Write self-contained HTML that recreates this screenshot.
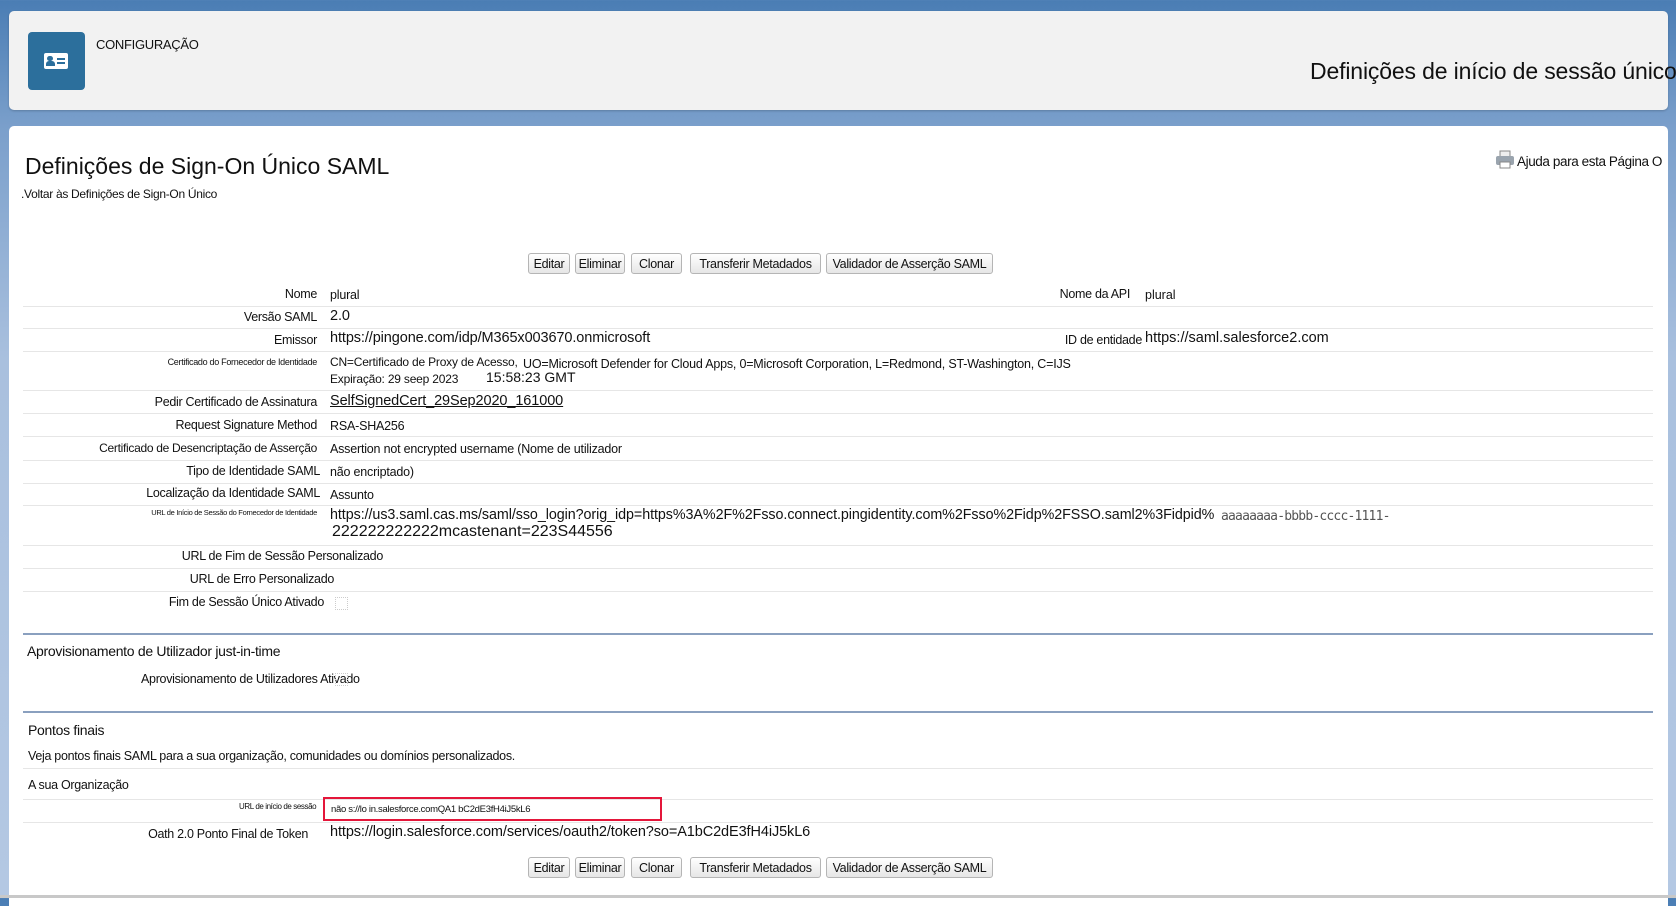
<!DOCTYPE html>
<html><head><meta charset="utf-8">
<style>
*{margin:0;padding:0;box-sizing:border-box}
body{width:1676px;height:898px;overflow:hidden;position:relative;font-family:"Liberation Sans",sans-serif;color:#111;background:linear-gradient(180deg,#4a7db4 0%,#7a9fcb 14%,#a9c0de 40%,#b4c8e3 100%)}
.a{position:absolute;white-space:nowrap}
.hdr{left:9px;top:11px;width:1659px;height:99px;background:#f2f2f2;border-radius:5px;box-shadow:0 1px 2px rgba(0,0,0,.2)}
.main{left:9px;top:126px;width:1659px;height:780px;background:#fff;border-radius:5px 5px 0 0}
.lb{left:0;width:317px;text-align:right;font-size:12.5px;letter-spacing:-.3px}
.sm{font-size:9px;letter-spacing:-.3px}
.v{left:330px;font-size:12.5px;letter-spacing:-.2px}
.vl{left:330px;font-size:14.5px;letter-spacing:-.1px}
.ln{left:23px;width:1630px;height:1px;background:#e6e6e6}
.bl{left:23px;width:1630px;height:2px;background:#8aa0bf}
.btn{height:21px;border:1px solid #b5b5b5;border-radius:3px;background:linear-gradient(#fff,#e6e6e6);font-size:12.5px;letter-spacing:-.3px;text-align:center;line-height:20px}
.cb{width:13px;height:13px;border:1px dotted #ccc}
</style></head><body>
<div class="a hdr"></div>
<div class="a" style="left:28px;top:32px;width:57px;height:58px;background:#2c6f9c;border-radius:4px"></div>
<div class="a" style="left:44px;top:53px;width:24px;height:16px;background:#fff;border-radius:2px"></div>
<div class="a" style="left:47px;top:56px;width:6px;height:5px;background:#2c6f9c;border-radius:3px"></div>
<div class="a" style="left:46px;top:61px;width:9px;height:5px;background:#2c6f9c;border-radius:3px 3px 0 0"></div>
<div class="a" style="left:57px;top:58px;width:8px;height:2px;background:#2c6f9c"></div>
<div class="a" style="left:57px;top:62px;width:8px;height:2px;background:#2c6f9c"></div>
<div class="a" style="left:96px;top:37px;font-size:13px;letter-spacing:-.3px">CONFIGURAÇÃO</div>
<div class="a" style="left:1310px;top:58px;font-size:23px;letter-spacing:-.15px">Definições de início de sessão único</div>

<div class="a main"></div>
<div class="a" style="left:25px;top:153px;font-size:23px">Definições de Sign-On Único SAML</div>
<div class="a" style="left:21px;top:187px;font-size:12px;letter-spacing:-.3px">.Voltar às Definições de Sign-On Único</div>
<svg class="a" style="left:1495px;top:150px" width="20" height="20" viewBox="0 0 20 20"><rect x="5" y="1" width="10" height="6" fill="#eee" stroke="#888"/><rect x="1" y="6" width="18" height="9" rx="2" fill="#9aa4ae"/><rect x="5" y="12" width="10" height="6" fill="#fff" stroke="#888"/></svg>
<div class="a" style="left:1517px;top:154px;font-size:13.5px;letter-spacing:-.4px">Ajuda para esta Página O</div>

<div class="a btn" style="left:528px;top:253px;width:42px">Editar</div>
<div class="a btn" style="left:575px;top:253px;width:50px">Eliminar</div>
<div class="a btn" style="left:631px;top:253px;width:51px">Clonar</div>
<div class="a btn" style="left:690px;top:253px;width:131px">Transferir Metadados</div>
<div class="a btn" style="left:826px;top:253px;width:167px">Validador de Asserção SAML</div>

<div class="a lb" style="top:287px">Nome</div><div class="a v" style="top:288px">plural</div>
<div class="a" style="left:1000px;width:130px;text-align:right;top:287px;font-size:12.5px;letter-spacing:-.3px">Nome da API</div><div class="a" style="left:1145px;top:288px;font-size:12.5px">plural</div>
<div class="a ln" style="top:306px"></div>
<div class="a lb" style="top:310px">Versão SAML</div><div class="a vl" style="top:308px">2.0</div>
<div class="a ln" style="top:328px"></div>
<div class="a lb" style="top:333px">Emissor</div><div class="a vl" style="top:330px">https://pingone.com/idp/M365x003670.onmicrosoft</div>
<div class="a" style="left:1000px;width:142px;text-align:right;top:333px;font-size:12.5px;letter-spacing:-.3px">ID de entidade</div><div class="a" style="left:1145px;top:330px;font-size:14.5px">https://saml.salesforce2.com</div>
<div class="a ln" style="top:351px"></div>
<div class="a lb sm" style="top:357px">Certificado do Fornecedor de Identidade</div>
<div class="a v" style="top:355px;font-size:12px">CN=Certificado de Proxy de Acesso,</div>
<div class="a" style="left:523px;top:357px;font-size:12.5px;letter-spacing:-.2px">UO=Microsoft Defender for Cloud Apps, 0=Microsoft Corporation, L=Redmond, ST-Washington, C=IJS</div>
<div class="a v" style="top:372px;font-size:12px">Expiração: 29 seep 2023</div>
<div class="a" style="left:486px;top:369px;font-size:14px">15:58:23 GMT</div>
<div class="a ln" style="top:390px"></div>
<div class="a lb" style="top:395px">Pedir Certificado de Assinatura</div><div class="a vl" style="top:393px;text-decoration:underline">SelfSignedCert_29Sep2020_161000</div>
<div class="a ln" style="top:413px"></div>
<div class="a lb" style="top:418px">Request Signature Method</div><div class="a v" style="top:419px">RSA-SHA256</div>
<div class="a ln" style="top:436px"></div>
<div class="a lb" style="top:441px;font-size:12px">Certificado de Desencriptação de Asserção</div><div class="a v" style="top:442px">Assertion not encrypted username (Nome de utilizador</div>
<div class="a ln" style="top:460px"></div>
<div class="a lb" style="top:464px;width:320px">Tipo de Identidade SAML</div><div class="a v" style="top:465px">não encriptado)</div>
<div class="a ln" style="top:483px"></div>
<div class="a lb" style="top:486px;width:320px">Localização da Identidade SAML</div><div class="a v" style="top:488px">Assunto</div>
<div class="a ln" style="top:505px"></div>
<div class="a lb sm" style="top:508px;font-size:7.5px">URL de Início de Sessão do Fornecedor de Identidade</div>
<div class="a vl" style="top:507px;font-size:14.3px;letter-spacing:-.06px">https://us3.saml.cas.ms/saml/sso_login?orig_idp=https%3A%2F%2Fsso.connect.pingidentity.com%2Fsso%2Fidp%2FSSO.saml2%3Fidpid%</div>
<div class="a" style="left:1221px;top:509px;font-size:13px;color:#555;font-family:'DejaVu Sans Mono','Liberation Mono',monospace;letter-spacing:-.8px">aaaaaaaa-bbbb-cccc-1111-</div>
<div class="a" style="left:332px;top:523px;font-size:16px">222222222222mcastenant=223S44556</div>
<div class="a ln" style="top:545px"></div>
<div class="a lb" style="top:549px;width:383px">URL de Fim de Sessão Personalizado</div>
<div class="a ln" style="top:568px"></div>
<div class="a lb" style="top:572px;width:334px">URL de Erro Personalizado</div>
<div class="a ln" style="top:591px"></div>
<div class="a lb" style="top:595px;width:324px">Fim de Sessão Único Ativado</div>
<div class="a cb" style="left:335px;top:597px"></div>
<div class="a bl" style="top:633px"></div>
<div class="a" style="left:27px;top:643px;font-size:14px;letter-spacing:-.3px">Aprovisionamento de Utilizador just-in-time</div>
<div class="a" style="left:141px;top:672px;font-size:12.5px;letter-spacing:-.3px">Aprovisionamento de Utilizadores Ativado</div>
<div class="a cb" style="left:335px;top:673px"></div>
<div class="a bl" style="top:711px"></div>
<div class="a" style="left:28px;top:722px;font-size:14px;letter-spacing:-.3px">Pontos finais</div>
<div class="a" style="left:28px;top:749px;font-size:12.5px;letter-spacing:-.3px">Veja pontos finais SAML para a sua organização, comunidades ou domínios personalizados.</div>
<div class="a ln" style="top:768px"></div>
<div class="a" style="left:28px;top:778px;font-size:12.5px;letter-spacing:-.3px">A sua Organização</div>
<div class="a ln" style="top:799px"></div>
<div class="a" style="left:239px;top:802px;font-size:8px;letter-spacing:-.4px">URL de início de sessão</div>
<div class="a" style="left:323px;top:797px;width:339px;height:24px;border:2px solid #e4163a"></div>
<div class="a" style="left:331px;top:804px;font-size:9.5px;letter-spacing:-.3px">não s://lo in.salesforce.comQA1 bC2dE3fH4iJ5kL6</div>
<div class="a ln" style="top:822px"></div>
<div class="a lb" style="top:827px;width:308px">Oath 2.0 Ponto Final de Token</div>
<div class="a vl" style="top:824px">https://login.salesforce.com/services/oauth2/token?so=A1bC2dE3fH4iJ5kL6</div>

<div class="a btn" style="left:528px;top:857px;width:42px">Editar</div>
<div class="a btn" style="left:575px;top:857px;width:50px">Eliminar</div>
<div class="a btn" style="left:631px;top:857px;width:51px">Clonar</div>
<div class="a btn" style="left:690px;top:857px;width:131px">Transferir Metadados</div>
<div class="a btn" style="left:826px;top:857px;width:167px">Validador de Asserção SAML</div>
<div class="a" style="left:0;top:895px;width:1676px;height:3px;background:#c8c8c8"></div>
</body></html>
